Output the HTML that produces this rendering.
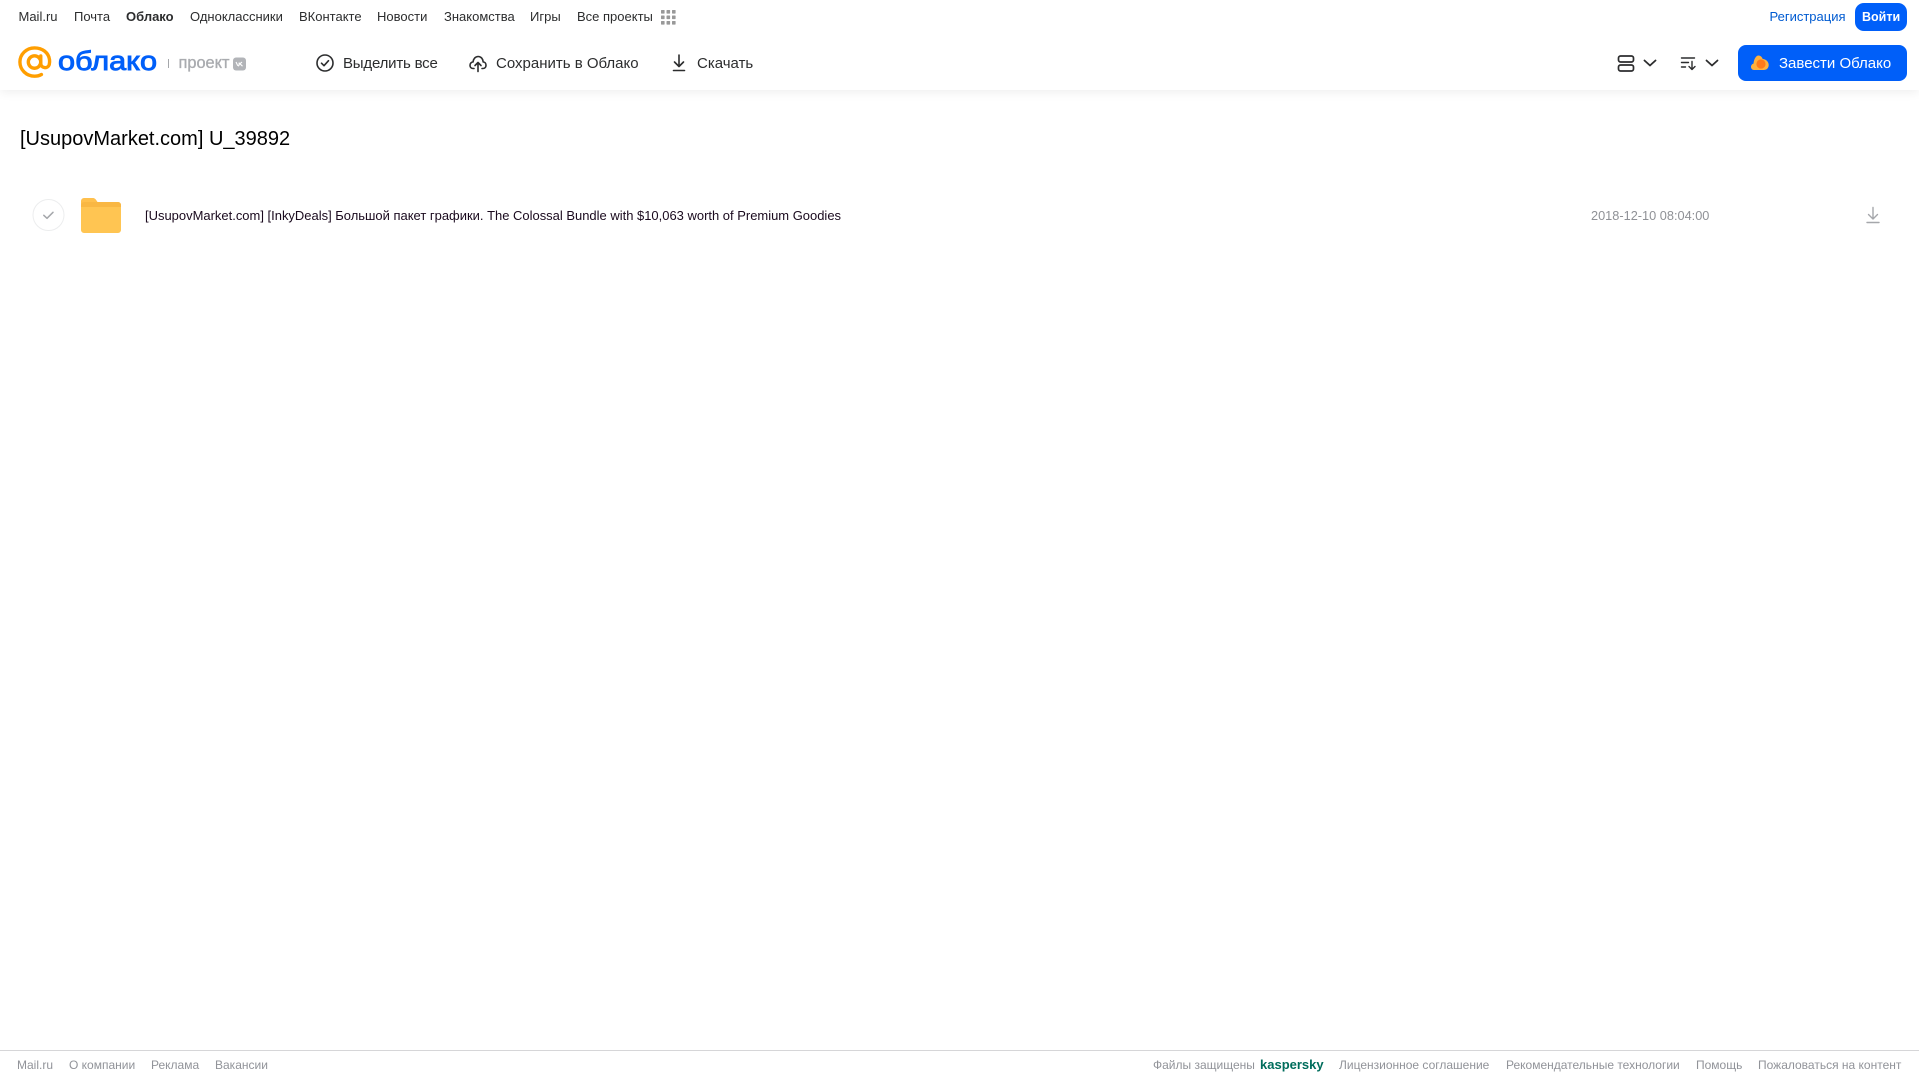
<!DOCTYPE html>
<html lang="ru">
<head>
<meta charset="utf-8">
<title>[UsupovMarket.com] U_39892</title>
<style>
html,body{margin:0;padding:0;background:#fff}
body{position:relative;width:1919px;height:1079px;overflow:hidden;font-family:"Liberation Sans",Arial,sans-serif}
.t{position:absolute;white-space:nowrap;line-height:18px;height:18px}
.n{top:8px;font-size:13px;color:#2c2d2e}
.a{top:55px;font-size:15px;color:#2c2d2e}
.f{top:1056px;font-size:12px;color:#919399}
header{position:absolute;left:0;top:0;width:1919px;height:90px;background:#fff;box-shadow:0 2px 10px rgba(0,0,0,.07)}
svg{position:absolute;display:block}
.btn{position:absolute;background:#005ff9;border-radius:8px}
</style>
</head>
<body>
<header>
<span class="t n" style="left:18.5px">Mail.ru</span>
<span class="t n" style="left:74px">Почта</span>
<span class="t n" style="left:126px;font-weight:bold">Облако</span>
<span class="t n" style="left:190px">Одноклассники</span>
<span class="t n" style="left:299px">ВКонтакте</span>
<span class="t n" style="left:377px">Новости</span>
<span class="t n" style="left:444px">Знакомства</span>
<span class="t n" style="left:530px">Игры</span>
<span class="t n" style="left:577px">Все проекты</span>
<svg style="left:661px;top:10px" width="15" height="15" fill="#999">
<rect x="0" y="0" width="3.6" height="3.6" rx=".6"/><rect x="5.5" y="0" width="3.6" height="3.6" rx=".6"/><rect x="11" y="0" width="3.6" height="3.6" rx=".6"/>
<rect x="0" y="5.5" width="3.6" height="3.6" rx=".6"/><rect x="5.5" y="5.5" width="3.6" height="3.6" rx=".6"/><rect x="11" y="5.5" width="3.6" height="3.6" rx=".6"/>
<rect x="0" y="11" width="3.6" height="3.6" rx=".6"/><rect x="5.5" y="11" width="3.6" height="3.6" rx=".6"/><rect x="11" y="11" width="3.6" height="3.6" rx=".6"/>
</svg>
<span class="t n" style="left:1769.5px;color:#005bd1">Регистрация</span>
<div class="btn" style="left:1855px;top:3px;width:52px;height:28px;border-radius:9px"></div>
<span class="t n" style="left:1862px;color:#fff;font-weight:bold;font-size:12.5px">Войти</span>

<!-- logo -->
<svg style="left:18px;top:46px" width="34" height="33" viewBox="0 0 36 35" fill="none" stroke="#ff9e00" stroke-width="3.6">
<circle cx="17.5" cy="17" r="6.6"/>
<path d="M24.1 10.5V18.500a4.600 4.600 0 0 0 9 1.200C33.600 17.500 33.600 16 33.400 14.600 32.400 7 25.800 2 17.500 2 8.800 2 2 8.800 2 17s6.800 15 15.500 15c2.800 0 5.200-.6 7.300-1.800" stroke-linecap="round"/>
</svg>
<svg style="left:56px;top:42px" width="106" height="36">
<text x="2" y="28" font-family="Liberation Sans, sans-serif" font-size="27" fill="#005ff9" stroke="#005ff9" stroke-width=".9" textLength="99" lengthAdjust="spacingAndGlyphs">облако</text>
</svg>
<div style="position:absolute;left:168px;top:59px;width:1px;height:9px;background:#a5a7ab"></div>
<svg style="left:177px;top:52px" width="56" height="22">
<text x="1.500" y="16" font-family="Liberation Sans, sans-serif" font-size="16.500" fill="#a9abaf" stroke="#a9abaf" stroke-width=".35" textLength="51" lengthAdjust="spacingAndGlyphs">проект</text>
</svg>
<svg style="left:233px;top:57px" width="14" height="14">
<rect width="13" height="13" y=".5" rx="3" fill="#b2b4b8"/>
<path d="M3 5l1.800 3.800M5 9c1 0 1.200-.8 1.200-3.500M6.300 7.300L9 5M7.200 7l2.300 2.200" stroke="#fff" stroke-width="1.100" fill="none"/>
</svg>

<!-- toolbar -->
<svg style="left:315px;top:53px" width="20" height="20" fill="none" stroke="#2c2d2e" stroke-width="1.600">
<circle cx="10" cy="10" r="8"/><path d="M6.500 10.200l2.500 2.500 4.500-5" stroke-linecap="round" stroke-linejoin="round"/>
</svg>
<span class="t a" style="left:343px;letter-spacing:-.2px">Выделить все</span>
<svg style="left:468px;top:53px" width="20" height="20" fill="none" stroke="#2c2d2e" stroke-width="1.600" stroke-linecap="round" stroke-linejoin="round">
<path d="M6 15.500H5.200C3.200 15.500 2 14 2 12.200 2 10.400 3.400 9 5 9 5.300 5.800 7.400 3.500 10.200 3.500c2.800 0 4.800 2.300 5 5.500 1.600 0 2.800 1.400 2.800 3.200 0 1.800-1.200 3.300-3.200 3.300H14"/>
<path d="M10 18.500V10M7 12.500l3-3 3 3"/>
</svg>
<span class="t a" style="left:496px">Сохранить в Облако</span>
<svg style="left:670px;top:53px" width="18" height="20" fill="none" stroke="#2c2d2e" stroke-width="1.600" stroke-linecap="round" stroke-linejoin="round">
<path d="M9 2v11.500M4.500 9l4.500 4.500L13.500 9M3.500 17.500h11"/>
</svg>
<span class="t a" style="left:697px">Скачать</span>

<svg style="left:1617px;top:55px" width="18" height="17" fill="none" stroke="#2c2d2e" stroke-width="1.700">
<rect x="1.500" y="1" width="15" height="6" rx="2"/><rect x="1.500" y="10" width="15" height="6" rx="2"/>
</svg>
<svg style="left:1643px;top:59px" width="14" height="8" fill="none" stroke="#2c2d2e" stroke-width="1.800" stroke-linecap="round" stroke-linejoin="round"><path d="M1.500 1.500L7 6.500l5.500-5"/></svg>
<svg style="left:1680px;top:56px" width="18" height="15" fill="none" stroke="#2c2d2e" stroke-width="1.400" stroke-linecap="round" stroke-linejoin="round">
<path d="M1.500 2h13M1.500 6.500h7M1.500 11h4M12 5.500v8M9 10.500l3 3 3-3"/>
</svg>
<svg style="left:1705px;top:59px" width="14" height="8" fill="none" stroke="#2c2d2e" stroke-width="1.800" stroke-linecap="round" stroke-linejoin="round"><path d="M1.500 1.500L7 6.500l5.500-5"/></svg>

<div class="btn" style="left:1738px;top:45px;width:169px;height:36px"></div>
<svg style="left:1750px;top:54px" width="20" height="17">
<path d="M4 16C1.800 16 1 14.300 1 12.800 1 11 2.300 9.800 3.500 9.600 4 5 6 1.500 8.500 1.500c2 0 3.500 1.500 4.200 3.500 3 0 6 2.500 6 6 0 3-2 5-5 5z" fill="#ffb13d"/>
<circle cx="11" cy="10" r="4.600" fill="#ff7a1a"/>
</svg>
<span class="t a" style="left:1779px;color:#fff">Завести Облако</span>
</header>

<main>
<h1 class="t" style="left:20px;top:125px;margin:0;font-size:20px;line-height:28px;height:28px;font-weight:normal;color:#000">[UsupovMarket.com] U_39892</h1>

<svg style="left:32px;top:198px" width="34" height="34" fill="none">
<circle cx="16.500" cy="17" r="15.500" stroke="#ecedee"/>
<path d="M11.800 17.300l3.200 3 6-6" stroke="#a5a7ab" stroke-width="1.500" stroke-linecap="round" stroke-linejoin="round"/>
</svg>
<svg style="left:80px;top:197px" width="42" height="36">
<path d="M1 4a3 3 0 0 1 3-3h8.500c2.200 0 3 1 4 2.500l1 1.500H38a3 3 0 0 1 3 3v24a3 3 0 0 1-3 3H4a3 3 0 0 1-3-3z" fill="#ffc04d"/>
<path d="M1 9.500a2 2 0 0 1 2-2h36a2 2 0 0 1 2 2V33a3 3 0 0 1-3 3H4a3 3 0 0 1-3-3z" fill="#ffc552"/>
<path d="M1 8a3 3 0 0 1 3-3h13.500L38 5a3 3 0 0 1 3 3v2H1z" fill="#f9b743"/>
</svg>
<span class="t" style="left:145px;top:206.500px;font-size:12.970px;color:#1a0a1e">[UsupovMarket.com] [InkyDeals] Большой пакет графики. The Colossal Bundle with $10,063 worth of Premium Goodies</span>
<span class="t" style="left:1591px;top:206.500px;font-size:12.750px;color:#8f9196">2018-12-10 08:04:00</span>
<svg style="left:1865px;top:206px" width="16" height="18" fill="none" stroke="#a5a7ab" stroke-width="1.400" stroke-linecap="round" stroke-linejoin="round">
<path d="M8 1.500v11M3.500 8.500l4.500 4.500 4.500-4.500M2 16.500h12"/>
</svg>
</main>

<footer>
<div style="position:absolute;left:0;top:1050px;width:1919px;height:1px;background:#d6d6d8"></div>
<span class="t f" style="left:17px">Mail.ru</span>
<span class="t f" style="left:69px">О компании</span>
<span class="t f" style="left:151px">Реклама</span>
<span class="t f" style="left:215px">Вакансии</span>
<span class="t f" style="left:1153px">Файлы защищены</span>
<span class="t" style="left:1260px;top:1056px;font-size:13px;font-weight:bold;color:#006d5c">kaspersky</span>
<span class="t f" style="left:1339px">Лицензионное соглашение</span>
<span class="t f" style="left:1506px">Рекомендательные технологии</span>
<span class="t f" style="left:1696px">Помощь</span>
<span class="t f" style="left:1758px">Пожаловаться на контент</span>
</footer>
</body>
</html>
